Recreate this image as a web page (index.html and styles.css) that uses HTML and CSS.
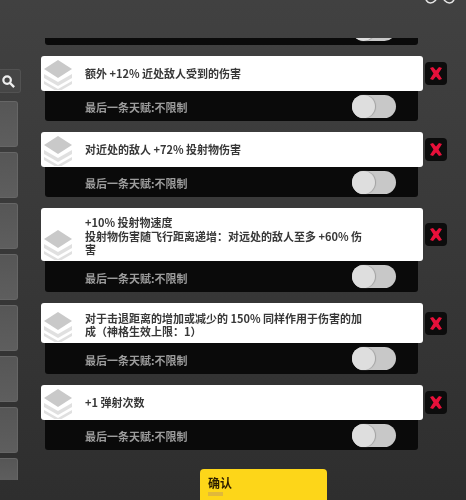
FILE: index.html
```html
<!DOCTYPE html>
<html lang="zh-CN">
<head>
<meta charset="utf-8">
<title>天赋</title>
<link rel="stylesheet" href="styles.css">
</head>
<body>
<svg class="defs" aria-hidden="true">
  <symbol id="stack" viewBox="0 0 28 30">
    <path class="stack-low" d="M0 14 14 22 28 14 28 18 14 26 0 18Z"/>
    <path class="stack-low" d="M0 21 14 29 28 21 28 24 14 32 0 24Z"/>
    <path class="stack-top" d="M14 0 28 9 14 18 0 9Z"/>
  </symbol>
  <symbol id="cross" viewBox="0 0 22 22">
    <path d="M5 5.500 8 4.500 11 8 14 4.500 17 5.500 13.500 11 17 16.500 14 17.500 11 14 8 17.500 5 16.500 8.500 11Z"/>
  </symbol>
</svg>
<div class="screen">
  <header class="top">
    <svg class="close" viewBox="0 0 30 4"><path d="M1 0Q5 6 11 0M19 0Q25 6 29 0"/></svg>
  </header>
  <div class="body">
    <aside class="side">
      <button class="search" aria-label="搜索">
        <svg viewBox="0 0 16 16"><circle cx="6.500" cy="6.500" r="4"/><path d="M9.500 9.500 14 14"/></svg>
      </button>
      <div class="tile"></div>
      <div class="tile"></div>
      <div class="tile"></div>
      <div class="tile"></div>
      <div class="tile"></div>
      <div class="tile"></div>
      <div class="tile"></div>
      <div class="tile tile-cut"></div>
    </aside>
    <main class="main">
      <div class="stub"><span class="toggle"><span class="knob"></span></span></div>
      <section class="item">
        <div class="card">
          <svg class="stack"><use href="#stack"/></svg>
          <p class="title">额外 +12% 近处敌人受到的伤害</p>
        </div>
        <button class="remove" aria-label="移除"><svg><use href="#cross"/></svg></button>
        <div class="row"><span class="label">最后一条天赋:不限制</span><span class="toggle"><span class="knob"></span></span></div>
      </section>
      <section class="item">
        <div class="card">
          <svg class="stack"><use href="#stack"/></svg>
          <p class="title">对近处的敌人 +72% 投射物伤害</p>
        </div>
        <button class="remove" aria-label="移除"><svg><use href="#cross"/></svg></button>
        <div class="row"><span class="label">最后一条天赋:不限制</span><span class="toggle"><span class="knob"></span></span></div>
      </section>
      <section class="item">
        <div class="card card-tall">
          <svg class="stack"><use href="#stack"/></svg>
          <div class="title">
            <p class="line">+10% 投射物速度</p>
            <p class="line">投射物伤害随飞行距离递增：对远处的敌人至多 +60% 伤害</p>
          </div>
        </div>
        <button class="remove" aria-label="移除"><svg><use href="#cross"/></svg></button>
        <div class="row row-tall"><span class="label">最后一条天赋:不限制</span><span class="toggle"><span class="knob"></span></span></div>
      </section>
      <section class="item">
        <div class="card card-mid">
          <svg class="stack"><use href="#stack"/></svg>
          <p class="title">对于击退距离的增加或减少的 150% 同样作用于伤害的加成（神格生效上限：1）</p>
        </div>
        <button class="remove" aria-label="移除"><svg><use href="#cross"/></svg></button>
        <div class="row row-tall"><span class="label">最后一条天赋:不限制</span><span class="toggle"><span class="knob"></span></span></div>
      </section>
      <section class="item">
        <div class="card">
          <svg class="stack"><use href="#stack"/></svg>
          <p class="title">+1 弹射次数</p>
        </div>
        <button class="remove" aria-label="移除"><svg><use href="#cross"/></svg></button>
        <div class="row"><span class="label">最后一条天赋:不限制</span><span class="toggle"><span class="knob"></span></span></div>
      </section>
      <button class="confirm"><span class="confirm-text">确认</span><span class="confirm-sub"></span></button>
    </main>
  </div>
</div>
</body>
</html>
```
FILE: styles.css
```css
* { box-sizing: border-box; }
html, body { margin: 0; height: 500px; overflow: hidden; background: #333; }
.defs { display: none; }
.screen {
  width: 466px;
  height: 500px;
  overflow: hidden;
  display: flex;
  flex-direction: column;
  background: linear-gradient(180deg, #414141 0%, #3a3a3a 40%, #2e2e2e 100%);
  font-family: "Noto Sans CJK SC", "Liberation Sans", sans-serif;
  filter: blur(0.7px);
}
.top { height: 38px; flex: none; padding-left: 425px; }
.close { display: block; width: 30px; height: 4px; }
.close path { fill: none; stroke: #e4e4e4; stroke-width: 1.6; }
.body { display: flex; flex: 1; min-height: 0; }
.side {
  width: 41px;
  flex: none;
  display: flex;
  flex-direction: column;
  gap: 5px;
  padding-top: 31px;
}
.search {
  width: 21px;
  height: 24px;
  margin: 0 0 3px;
  padding: 0 3px 0 0;
  border: 1px solid #525252;
  border-left: 0;
  border-radius: 0 3px 3px 0;
  background: #464646;
  display: flex;
  align-items: center;
  justify-content: center;
}
.search svg { width: 15px; height: 15px; fill: none; stroke: #eee; stroke-width: 2.4; }
.tile {
  width: 18px;
  height: 46px;
  flex: none;
  border: 1px solid #666;
  border-left: 0;
  border-radius: 0 3px 3px 0;
  background: linear-gradient(180deg, #565656, #5e5e5e);
}
.tile-cut { height: 22px; border-bottom: 0; border-radius: 0 3px 0 0; }
.main { flex: 1; min-width: 0; display: flex; flex-direction: column; }
.stub {
  width: 373px;
  height: 7px;
  flex: none;
  margin: 0 0 11px 4px;
  padding: 0 22px 4px 0;
  display: flex;
  justify-content: flex-end;
  align-items: flex-end;
  overflow: hidden;
  background: #0a0a0a;
  border-radius: 0 0 3px 3px;
}
.item {
  display: grid;
  grid-template-columns: 382px 22px;
  column-gap: 2px;
  margin-bottom: 11px;
}
.card {
  height: 35px;
  display: flex;
  align-items: flex-end;
  gap: 13px;
  padding: 0 6px 1px 3px;
  background: #fff;
  border-radius: 3px;
  overflow: hidden;
}
.card-tall { height: 53px; }
.card-mid { height: 40px; }
.stack { width: 28px; height: 30px; flex: none; }
.stack-top { fill: #c9c9c9; }
.stack-low { fill: #e0e0e0; }
.title {
  margin: 2px 0 0;
  width: 282px;
  align-self: center;
  font-size: 11px;
  line-height: 13.5px;
  font-weight: 700;
  color: #383838;
}
.line { margin: 0; }
.card-tall .title, .card-mid .title { margin-top: 5px; }
.remove {
  align-self: center;
  width: 22px;
  height: 23px;
  padding: 0;
  border: 0;
  border-radius: 4px;
  background: #0c0c0c;
}
.remove svg { display: block; width: 22px; height: 23px; fill: #e8103a; }
.row {
  grid-column: 1;
  width: 373px;
  height: 30px;
  margin-left: 4px;
  padding: 0 22px 0 40px;
  display: flex;
  align-items: center;
  justify-content: space-between;
  background: #0a0a0a;
  border-radius: 0 0 3px 3px;
}
.row-tall { height: 31px; }
.label { margin-top: 2px; font-size: 11px; color: #9c9c9c; font-weight: 700; }
.toggle {
  width: 44px;
  height: 23px;
  flex: none;
  display: block;
  border-radius: 12px;
  background: #c8c8c8;
}
.knob {
  display: block;
  width: 23px;
  height: 23px;
  border-radius: 50%;
  background: #dedede;
  box-shadow: 1px 0 1px #a0a0a0;
}
.confirm {
  width: 127px;
  height: 40px;
  flex: none;
  margin: 8px 0 0 159px;
  padding: 6px 0 0 8px;
  border: 0;
  border-radius: 4px 4px 0 0;
  background: #fdd619;
  display: flex;
  flex-direction: column;
  align-items: flex-start;
  font-family: inherit;
}
.confirm-text { font-size: 12px; line-height: 15px; font-weight: 700; color: #2a1c00; }
.confirm-sub { width: 15px; height: 4px; margin-top: 2px; background: #e0b93a; }
```
